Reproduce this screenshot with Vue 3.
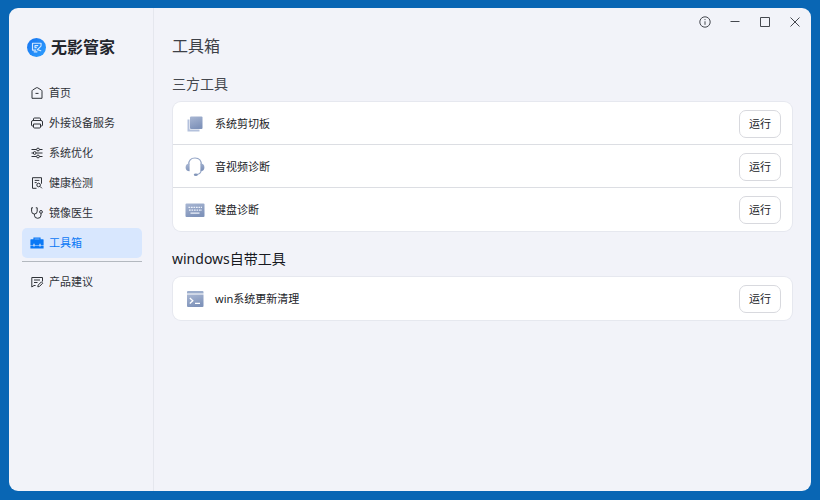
<script setup>
import { ref } from 'vue'

const active = ref('toolbox')

const navItems = [
  { id: 'home', label: '首页' },
  { id: 'devices', label: '外接设备服务' },
  { id: 'optimize', label: '系统优化' },
  { id: 'health', label: '健康检测' },
  { id: 'doctor', label: '镜像医生' },
  { id: 'toolbox', label: '工具箱' },
  { id: 'feedback', label: '产品建议', separated: true },
]

const groups = [
  {
    title: '三方工具',
    tone: 'soft',
    tools: [
      { id: 'clipboard', name: '系统剪切板' },
      { id: 'headset', name: '音视频诊断' },
      { id: 'keyboard', name: '键盘诊断' },
    ],
  },
  {
    title: 'windows自带工具',
    tone: 'strong',
    tools: [{ id: 'terminal', name: 'win系统更新清理' }],
  },
]
</script>

<template>
  <div class="desktop">
    <div class="window">
      <aside class="sidebar">
        <div class="brand">
          <svg class="brand-logo" viewBox="0 0 20 20" aria-hidden="true">
            <defs>
              <linearGradient id="brandFill" x1="0" y1="0" x2="1" y2="1">
                <stop offset="0" stop-color="#1673f0" />
                <stop offset="1" stop-color="#2fa0ff" />
              </linearGradient>
            </defs>
            <circle cx="10" cy="10" r="10" fill="url(#brandFill)" />
            <g fill="none" stroke="#d3e8ff" stroke-width="1.200" stroke-linecap="round" stroke-linejoin="round">
              <path d="M14.800 8V5.500H5.800v7.200h3.400M7.500 14.600h3" />
              <path d="M8.400 8h3M8.400 8v2.200h1.400" />
              <path d="M14.500 8.800l-3.600 3.400 3.600 1.200" />
            </g>
          </svg>
          <span>无影管家</span>
        </div>

        <nav class="nav">
          <a
            v-for="item in navItems"
            :key="item.id"
            href="#"
            class="nav-item"
            :class="{ active: active === item.id, separated: item.separated }"
            @click.prevent="active = item.id"
          >
            <svg class="nav-icon" viewBox="0 0 14 14" aria-hidden="true">
              <g v-if="item.id === 'home'">
                <path d="M2 5.200Q2 4.500 2.600 4.100L6.300 1.800Q7 1.400 7.700 1.800L11.400 4.100Q12 4.500 12 5.200V12.300H2Z" />
                <path d="M5.500 7.400h3" />
              </g>
              <g v-else-if="item.id === 'devices'">
                <path d="M3.500 4.500V3Q3.500 2 4.500 2h5Q10.500 2 10.500 3v1.500" />
                <path d="M3.500 10H2.600Q1.500 10 1.500 9V6Q1.500 4.500 3 4.500h8Q12.500 4.500 12.500 6v3Q12.500 10 11.400 10h-.9" />
                <path d="M3.500 8h7v3Q10.500 12 9.500 12h-5Q3.500 12 3.500 11Z" />
              </g>
              <g v-else-if="item.id === 'optimize'">
                <path d="M1.500 3.500h5M9.500 3.500h3M1.500 7h1.700M6.200 7h6.300M1.500 10.500h5M9.500 10.500h3" />
                <circle cx="8" cy="3.500" r="1.400" />
                <circle cx="4.700" cy="7" r="1.400" />
                <circle cx="8" cy="10.500" r="1.400" />
              </g>
              <g v-else-if="item.id === 'health'">
                <path d="M6.500 12.300H2.500V1.700h9v6M4.700 4.400h4.600M4.700 6.600h2" />
                <circle cx="8.600" cy="9" r="1.800" />
                <path d="M10 10.400l1.900 1.900" />
              </g>
              <g v-else-if="item.id === 'doctor'">
                <path d="M3 1.800H1.600v3.400Q1.600 8 4.400 8T7.200 5.200V1.800H5.800" />
                <path d="M4.400 8v1.200Q4.400 12.300 7.700 12.300T11 9.200V7.300" />
                <circle cx="11" cy="5.900" r="1.400" />
              </g>
              <g v-else-if="item.id === 'toolbox'" class="solid">
                <path d="M3.400 3.200V1.600h7.200v1.600H13q.6 0 .6.600v5.200h-3V7.800H9.400V9H4.600V7.800H3.400V9h-3V3.800q0-.6.600-.6ZM4.600 3.200h4.800v-.5H4.600Z" fill-rule="evenodd" />
                <path d="M.4 9.600h3v.8h1.200v-.8h4.800v.8h1.200v-.8h3v2.900H.4Z" />
              </g>
              <g v-else>
                <path d="M5.600 10.500H4L1.800 12V2.500h10.700v4M4 5h6M4 7.500h3.500" />
                <path d="M7.800 11.800l.3-1.700 3.300-3.200 1.300 1.300-3.300 3.300Z" />
              </g>
            </svg>
            <span>{{ item.label }}</span>
          </a>
        </nav>
      </aside>

      <main class="content">
        <header class="titlebar">
          <button type="button" class="win-btn" aria-label="关于">
            <svg viewBox="0 0 12 12">
              <circle cx="6" cy="6" r="5.200" />
              <path d="M6 5.300v3.500M6 3.100v1" />
            </svg>
          </button>
          <button type="button" class="win-btn" aria-label="最小化">
            <svg viewBox="0 0 12 12"><path d="M1.500 5.500h9" /></svg>
          </button>
          <button type="button" class="win-btn" aria-label="最大化">
            <svg viewBox="0 0 12 12"><path d="M1.500 1.500h9v9h-9Z" /></svg>
          </button>
          <button type="button" class="win-btn" aria-label="关闭">
            <svg viewBox="0 0 12 12"><path d="M1.500 1.500l9 9M10.500 1.500l-9 9" /></svg>
          </button>
        </header>

        <h1 class="page-title">工具箱</h1>

        <section v-for="group in groups" :key="group.title" class="group">
          <h2 class="group-title" :class="group.tone">{{ group.title }}</h2>
          <ul class="card">
            <li v-for="tool in group.tools" :key="tool.id" class="row">
              <svg class="tool-icon" viewBox="0 0 20 20" aria-hidden="true">
                <defs>
                  <linearGradient :id="'fill-' + tool.id" x1="0" y1="0" x2="0.400" y2="1">
                    <stop offset="0" stop-color="#a9b7d3" />
                    <stop offset="1" stop-color="#7f93ba" />
                  </linearGradient>
                </defs>
                <g v-if="tool.id === 'clipboard'">
                  <path d="M3.500 5.500V16.500H14.500" fill="none" stroke="#b4c1dc" stroke-width="2" />
                  <rect x="5" y="2.500" width="12.500" height="12.500" rx="1" fill="url(#fill-clipboard)" />
                </g>
                <g v-else-if="tool.id === 'headset'">
                  <path d="M3.600 8C3.600 3 6.200 1 10 1s6.400 2 6.400 7" fill="none" stroke="#94a5c6" stroke-width="1.200" />
                  <path d="M4.600 6.600v7.600Q.6 14 .6 10.400T4.600 6.600ZM15.400 6.600v7.600q4-.2 4-3.800T15.400 6.600Z" fill="url(#fill-headset)" />
                  <path d="M16.200 13.500Q15.600 17 11.500 17.700" fill="none" stroke="#94a5c6" stroke-width="1.200" />
                  <ellipse cx="10.800" cy="17.700" rx="2" ry="1.300" fill="#8295b9" />
                </g>
                <g v-else-if="tool.id === 'keyboard'">
                  <rect x="0.500" y="3.500" width="19" height="13.500" rx="1" fill="url(#fill-keyboard)" />
                  <path d="M3.500 7.300h13.500M4 10.100h13" fill="none" stroke="#edf2fb" stroke-width="1.300" stroke-dasharray="1.700 .8" />
                  <path d="M5.500 13.200h9" fill="none" stroke="#edf2fb" stroke-width="1.300" />
                </g>
                <g v-else>
                  <path d="M2 3q0-1 1-1h14.500q1 0 1 1v1.500H2Z" fill="#9cadcc" />
                  <path d="M2 5.500h16.500v11.500q0 1-1 1H3q-1 0-1-1Z" fill="url(#fill-terminal)" />
                  <path d="M4.800 9l3 2.700-3 2.700M10 14.400h5" fill="none" stroke="#fff" stroke-width="1.300" />
                </g>
              </svg>
              <span class="tool-name">{{ tool.name }}</span>
              <button type="button" class="run-btn" :aria-label="'运行 ' + tool.name">运行</button>
            </li>
          </ul>
        </section>
      </main>
    </div>
  </div>
</template>

<style>
body {
  background: #0966b4;
}
</style>

<style scoped>
.desktop {
  box-sizing: border-box;
  display: flex;
  min-height: 100vh;
  padding: 8px 9px 9px;
  background: #0966b4;
  color: #222429;
  font-family: "Noto Sans", "Noto Sans CJK SC", sans-serif;
  font-size: 11px;
  line-height: 16px;
}

.window {
  display: flex;
  flex: 1;
  overflow: hidden;
  border-radius: 9px;
  background: #f2f3f9;
}

.sidebar {
  box-sizing: border-box;
  flex: none;
  width: 145px;
  padding: 28px 11px 0 13px;
  border-right: 1px solid #e5e7ee;
}

.brand {
  display: flex;
  align-items: center;
  gap: 5px;
  height: 22px;
  padding-left: 5px;
  color: #23262d;
  font-size: 16px;
  font-weight: 700;
}

.brand-logo {
  width: 19px;
  height: 19px;
}

.nav {
  display: flex;
  flex-direction: column;
  margin-top: 20px;
}

.nav-item {
  position: relative;
  display: flex;
  align-items: center;
  gap: 5px;
  height: 30px;
  padding-left: 8px;
  border-radius: 5px;
  color: #2f3238;
  text-decoration: none;
}

.nav-item.active {
  background: #d8e7fe;
  color: #0a78f5;
}

.nav-item.separated {
  margin-top: 9px;
}

.nav-item.separated::before {
  position: absolute;
  top: -6px;
  right: 0;
  left: 0;
  height: 1px;
  background: #b3b8bf;
  content: "";
}

.nav-icon {
  width: 14px;
  height: 14px;
  fill: none;
  stroke: currentColor;
  stroke-width: 1;
}

.solid {
  fill: currentColor;
  stroke: none;
}

.content {
  flex: 1;
  min-width: 0;
  padding: 0 18px 20px;
}

.titlebar {
  display: flex;
  justify-content: flex-end;
  gap: 10px;
  padding-top: 4px;
  margin-right: -12px;
}

.win-btn {
  display: grid;
  place-items: center;
  width: 20px;
  height: 20px;
  padding: 0;
  border: 0;
  background: none;
  color: #45484f;
}

.win-btn svg {
  width: 12px;
  height: 12px;
  fill: none;
  stroke: currentColor;
  stroke-width: 1;
}

.page-title {
  margin: 4px 0 0;
  color: #3d4047;
  font-size: 16px;
  font-weight: 400;
  line-height: 20px;
}

.group {
  margin-top: 18px;
}

.group-title {
  margin: 0 0 8px;
  font-size: 14px;
  font-weight: 400;
  line-height: 20px;
}

.group-title.soft {
  color: #45484f;
}

.group-title.strong {
  color: #17191f;
}

.card {
  margin: 0 1px;
  padding: 0;
  border-radius: 8px;
  background: #fff;
  box-shadow: 0 0 0 1px #e6e8ef;
  list-style: none;
}

.row {
  display: flex;
  align-items: center;
  height: 43px;
  padding: 0 11px 0 12px;
}

.row + .row {
  box-shadow: 0 -1px 0 #dcdee3;
}

.tool-icon {
  flex: none;
  width: 20px;
  height: 20px;
}

.tool-name {
  flex: 1;
  margin-left: 10px;
}

.run-btn {
  width: 42px;
  height: 28px;
  padding: 0;
  border: 1px solid #d8d9de;
  border-radius: 7px;
  background: #fff;
  color: #222429;
  font: inherit;
}
</style>
